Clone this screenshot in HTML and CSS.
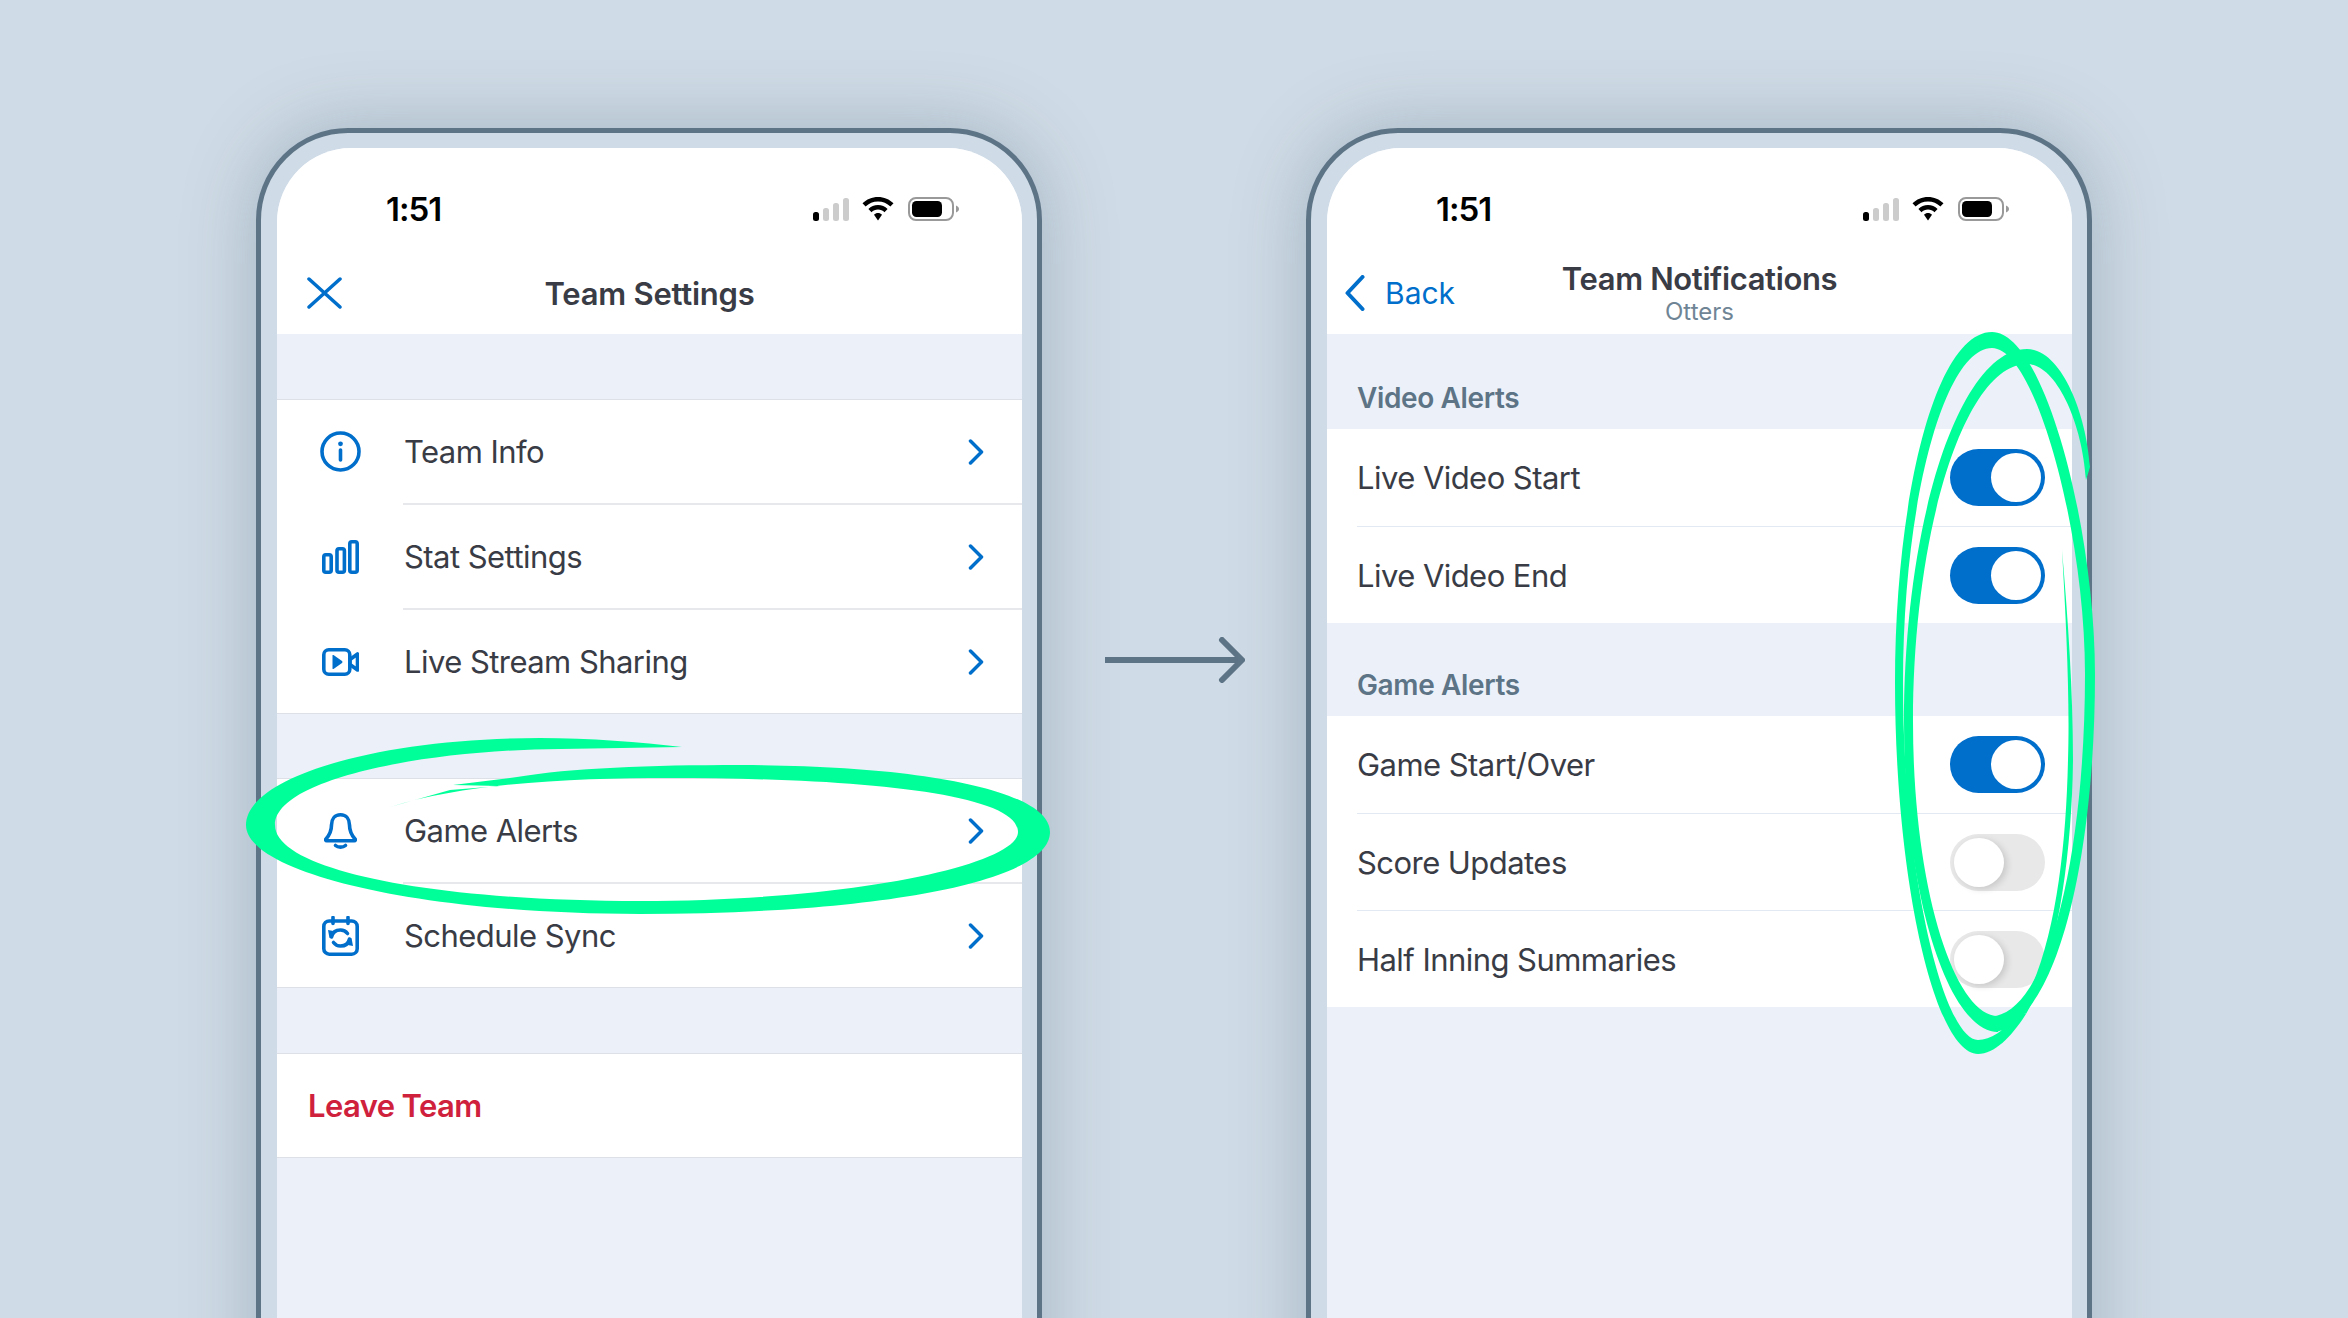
FILE: index.html
```html
<!DOCTYPE html>
<html lang="en">
<head>
<meta charset="utf-8">
<title>Team Settings and Team Notifications</title>
<link rel="stylesheet" href="styles.css">
</head>
<body>
<div class="page">
  <section class="phone">
    <div class="screen">
      <header class="top">
        <div class="status">
          <span class="time">1:51</span>
          <div class="status-icons">
            <svg class="sig" viewBox="0 0 36 23"><rect x="0" y="14" width="6" height="9" rx="2.500" fill="#000"/><rect x="10" y="10" width="6" height="13" rx="2.500" fill="#ccc"/><rect x="20" y="5" width="6" height="18" rx="2.500" fill="#ccc"/><rect x="30" y="0" width="6" height="23" rx="2.500" fill="#ccc"/></svg>
            <svg class="wifi" viewBox="0 0 32 24"><path d="M16 0C10 0 4.500 2.300 0.500 6.300L3.600 9.500C6.800 6.300 11.200 4.400 16 4.400S25.200 6.300 28.400 9.500L31.500 6.300C27.500 2.300 22 0 16 0Z"/><path d="M16 8C12.300 8 8.900 9.500 6.400 12L9.500 15.200C11.200 13.500 13.500 12.500 16 12.500S20.800 13.500 22.500 15.200L25.600 12C23.100 9.500 19.700 8 16 8Z"/><path d="M16 16C14.500 16 13.100 16.600 12 17.700L16 23.500L20 17.700C18.900 16.600 17.500 16 16 16Z"/></svg>
            <svg class="batt" viewBox="0 0 51 24"><rect x="1" y="1" width="44" height="22" rx="7" fill="none" stroke="#999" stroke-width="2"/><rect x="4" y="4" width="30" height="16" rx="4.500" fill="#000"/><path d="M48 8.500C50 9.500 51 10.500 51 12S50 14.500 48 15.500Z" fill="#999"/></svg>
          </div>
        </div>
        <div class="nav">
          <div class="nav-left">
            <svg class="close" viewBox="0 0 35 32"><path d="M2 2L33 30M33 2L2 30" fill="none" stroke="currentColor" stroke-width="3.500" stroke-linecap="round"/></svg>
          </div>
          <div class="nav-title">Team Settings</div>
          <div></div>
        </div>
      </header>

      <div class="gap"></div>
      <div class="group">
        <div class="row">
          <span class="icon"><svg viewBox="0 0 41 41" width="41" height="41"><circle cx="20.500" cy="20.500" r="18.500" class="ln"/><path d="M20.500 19V29" class="ln"/><circle cx="20.500" cy="12.800" r="2.400" class="dot"/></svg></span>
          <span class="label">Team Info</span>
          <svg class="chev" viewBox="0 0 16 26"><path d="M2.500 2L13.500 13L2.500 24"/></svg>
        </div>
        <div class="row">
          <span class="icon"><svg viewBox="0 0 37 34" width="37" height="34"><rect x="1.800" y="14.800" width="7.400" height="17.400" rx="2" class="ln"/><rect x="15" y="8.800" width="7.400" height="23.400" rx="2" class="ln"/><rect x="27.800" y="1.800" width="7.400" height="30.400" rx="2" class="ln"/></svg></span>
          <span class="label">Stat Settings</span>
          <svg class="chev" viewBox="0 0 16 26"><path d="M2.500 2L13.500 13L2.500 24"/></svg>
        </div>
        <div class="row">
          <span class="icon"><svg viewBox="0 0 37 28" width="37" height="28"><rect x="1.800" y="1.800" width="26" height="24.400" rx="5" class="ln"/><path d="M10.500 7.500C10.500 7 11 6.700 11.500 7L20 13C20.600 13.500 20.600 14.500 20 15L11.500 21C11 21.300 10.500 21 10.500 20.500Z" class="dot"/><path d="M28 11.500L35.500 6V22L28 16.500Z" class="ln"/></svg></span>
          <span class="label">Live Stream Sharing</span>
          <svg class="chev" viewBox="0 0 16 26"><path d="M2.500 2L13.500 13L2.500 24"/></svg>
        </div>
      </div>
      <div class="gap gap-mid"></div>
      <div class="group">
        <div class="row">
          <span class="icon"><svg viewBox="0 0 33 36" width="33" height="36"><path d="M16.500 1.800C10.500 1.800 7.500 6.500 7.500 12C7.500 18 6 21.500 2 26C1.300 26.800 1.700 27.700 2.800 27.700H30.200C31.300 27.700 31.700 26.800 31 26C27 21.500 25.500 18 25.500 12C25.500 6.500 22.500 1.800 16.500 1.800Z" class="ln"/><path d="M11.500 32.500C14 34.700 19 34.700 21.500 32.500" class="ln"/></svg></span>
          <span class="label">Game Alerts</span>
          <svg class="chev" viewBox="0 0 16 26"><path d="M2.500 2L13.500 13L2.500 24"/></svg>
        </div>
        <div class="row">
          <span class="icon"><svg viewBox="0 0 37 40" width="37" height="40"><rect x="1.800" y="5" width="33.400" height="33.200" rx="5.500" class="ln"/><path d="M11 1.500V7.500M26 1.500V7.500" class="ln"/><path d="M9.500 21C10.500 16.500 14 14 18.500 14C21.500 14 24 15.500 25.500 17.500" class="ln"/><path d="M27.500 23C26.500 27.500 23 30 18.500 30C15.500 30 13 28.500 11.500 26.500" class="ln"/><path d="M6 14L14 15.500L7.500 22ZM31 30L23 28.500L29.500 22Z" class="dot"/></svg></span>
          <span class="label">Schedule Sync</span>
          <svg class="chev" viewBox="0 0 16 26"><path d="M2.500 2L13.500 13L2.500 24"/></svg>
        </div>
      </div>
      <div class="gap"></div>
      <div class="group">
        <div class="row row-plain"><span class="danger">Leave Team</span></div>
      </div>
    </div>
  </section>

  <div class="arrow-col">
    <svg class="arrow" viewBox="0 0 140 46"><path d="M0 23H137" fill="none" stroke="#5d7486" stroke-width="6"/><path d="M117 3L137 23L117 43" fill="none" stroke="#5d7486" stroke-width="6" stroke-linecap="round" stroke-linejoin="round"/></svg>
  </div>

  <section class="phone">
    <div class="screen">
      <header class="top">
        <div class="status">
          <span class="time">1:51</span>
          <div class="status-icons">
            <svg class="sig" viewBox="0 0 36 23"><rect x="0" y="14" width="6" height="9" rx="2.500" fill="#000"/><rect x="10" y="10" width="6" height="13" rx="2.500" fill="#ccc"/><rect x="20" y="5" width="6" height="18" rx="2.500" fill="#ccc"/><rect x="30" y="0" width="6" height="23" rx="2.500" fill="#ccc"/></svg>
            <svg class="wifi" viewBox="0 0 32 24"><path d="M16 0C10 0 4.500 2.300 0.500 6.300L3.600 9.500C6.800 6.300 11.200 4.400 16 4.400S25.200 6.300 28.400 9.500L31.500 6.300C27.500 2.300 22 0 16 0Z"/><path d="M16 8C12.300 8 8.900 9.500 6.400 12L9.500 15.200C11.200 13.500 13.500 12.500 16 12.500S20.800 13.500 22.500 15.200L25.600 12C23.100 9.500 19.700 8 16 8Z"/><path d="M16 16C14.500 16 13.100 16.600 12 17.700L16 23.500L20 17.700C18.900 16.600 17.500 16 16 16Z"/></svg>
            <svg class="batt" viewBox="0 0 51 24"><rect x="1" y="1" width="44" height="22" rx="7" fill="none" stroke="#999" stroke-width="2"/><rect x="4" y="4" width="30" height="16" rx="4.500" fill="#000"/><path d="M48 8.500C50 9.500 51 10.500 51 12S50 14.500 48 15.500Z" fill="#999"/></svg>
          </div>
        </div>
        <div class="nav">
          <div class="nav-left back">
            <svg class="back-chev" viewBox="0 0 20 36"><path d="M17.500 2L2.500 18L17.500 34"/></svg>
            <span>Back</span>
          </div>
          <div class="nav-title two">
            <div>Team Notifications</div>
            <div class="sub">Otters</div>
          </div>
          <div></div>
        </div>
      </header>

      <div class="sec-head">Video Alerts</div>
      <div class="tgroup">
        <div class="trow"><span class="label">Live Video Start</span><span class="toggle on"><i class="knob"></i></span></div>
        <div class="trow"><span class="label">Live Video End</span><span class="toggle on"><i class="knob"></i></span></div>
      </div>
      <div class="sec-head sec-head-b">Game Alerts</div>
      <div class="tgroup">
        <div class="trow"><span class="label">Game Start/Over</span><span class="toggle on"><i class="knob"></i></span></div>
        <div class="trow"><span class="label">Score Updates</span><span class="toggle"><i class="knob"></i></span></div>
        <div class="trow"><span class="label">Half Inning Summaries</span><span class="toggle"><i class="knob"></i></span></div>
      </div>
    </div>
  </section>

  <svg class="marks" viewBox="0 0 2348 1318" aria-hidden="true">
    <path d="M682 747C640 742 590 738 540 738C378 738 246 777 246 825C246 873 420 914 640 914C860 914 1050 885 1050 832C1050 790 920 765 740 765C650 765 570 768 517 777L453 785L500 786L450 790L390 807C470 782 580 778 668 778C850 778 1018 792 1018 832C1018 865 850 901 640 901C430 901 275 870 275 825C275 780 420 750 561 749Z"/>
    <path d="M2090 467C2086 410 2060 349 2027 349C1960 349 1904 520 1904 722C1904 900 1950 1032 1998 1032V1016C1955 1016 1913 890 1913 722C1913 530 1965 364 2027 364C2055 364 2082 420 2086 480Z"/>
    <path d="M1996 1032C2060 1016 2095 850 2095 674C2095 530 2045 332 1992 332C1935 332 1895 500 1895 683C1895 880 1935 1054 1978 1054C1995 1054 2012 1036 2026 1014L2020 1010C2008 1028 1992 1040 1978 1040C1945 1040 1903 880 1903 683C1903 500 1945 348 1992 348C2035 348 2085 530 2085 674C2085 850 2050 1005 1996 1016Z"/>
    <path d="M2062 550C2066 620 2070 700 2068 760C2066 850 2055 950 2020 1010L2026 1014C2058 960 2072 850 2073 760C2073 690 2068 620 2062 550Z"/>
  </svg>
</div>
</body>
</html>
```

FILE: styles.css
```css
* { box-sizing: border-box; }
html, body { margin: 0; padding: 0; }
body {
  background: #cfdbe6;
  font-family: Inter, "Liberation Sans", sans-serif;
  color: #393c45;
}
.page {
  position: relative;
  width: 2348px;
  height: 1318px;
  overflow: hidden;
  display: flex;
  justify-content: center;
  align-items: flex-start;
  padding-top: 128px;
}
.phone {
  width: 786px;
  height: 1400px;
  flex: none;
  padding: 15px 15px 0 16px;
  background: #cfdbe6;
  border: 5px solid #5d7486;
  border-radius: 92px;
  box-shadow: 0 0 70px rgba(93, 116, 134, .38);
}
.screen {
  height: 100%;
  background: #ecf1f9;
  border-radius: 74px 74px 0 0;
  overflow: hidden;
}
.top { height: 186px; background: #fff; }
.status {
  height: 104px;
  padding: 45px 36px 27px 109px;
  display: flex;
  justify-content: space-between;
  align-items: center;
}
.time { font-size: 33px; font-weight: 600; color: #000; line-height: 32px; letter-spacing: -1px; }
.status-icons { display: flex; align-items: center; gap: 14px; margin-right: 27px; }
.sig { width: 36px; height: 23px; display: block; margin-right: -1px; }
.wifi { width: 32px; height: 24px; display: block; fill: #000; }
.batt { width: 51px; height: 24px; display: block; }
.nav {
  height: 82px;
  display: grid;
  grid-template-columns: 1fr auto 1fr;
  align-items: center;
}
.nav-left { display: flex; align-items: center; color: #006ecb; padding-left: 30px; }
.close { width: 35px; height: 32px; display: block; }
.nav-title { font-size: 31px; font-weight: 600; text-align: center; color: #393c45; letter-spacing: -.25px; }
.nav-title.two { line-height: 36px; letter-spacing: -.38px; }
.sub { font-size: 24px; font-weight: 400; color: #6f8595; line-height: 28px; margin-top: 1px; letter-spacing: 0; }
.back { padding-left: 18px; gap: 20px; font-size: 30px; }
.back-chev { width: 20px; height: 36px; display: block; fill: none; stroke: #006ecb; stroke-width: 4px; stroke-linecap: round; stroke-linejoin: round; }
.gap { height: 65px; }
.gap-mid { height: 64px; }
.group { background: #fff; border-top: 1px solid #dde1e7; border-bottom: 1px solid #dde1e7; }
.row {
  height: 103px;
  display: flex;
  align-items: center;
  padding-right: 38px;
}
.row + .row {
  height: 105px;
  border-top: 2px solid #e6e8ec;
  border-image: linear-gradient(to right, transparent 127px, #e6e8ec 127px) 1;
}
.row-plain { padding-left: 31px; }
.icon { width: 127px; flex: none; display: flex; justify-content: center; align-items: center; }
.icon svg { display: block; }
.ln { fill: none; stroke: #006ecb; stroke-width: 3.600px; stroke-linecap: round; stroke-linejoin: round; }
.dot { fill: #006ecb; }
.label { flex: 1; font-size: 31px; font-weight: 400; color: #393c45; letter-spacing: -.55px; }
.chev { width: 16px; height: 26px; fill: none; stroke: #006ecb; stroke-width: 3.500px; stroke-linecap: round; stroke-linejoin: round; }
.danger { font-size: 31px; font-weight: 600; color: #d0213c; letter-spacing: -.6px; }
.sec-head {
  height: 95px;
  padding: 0 0 14px 30px;
  display: flex;
  align-items: flex-end;
  font-size: 28px;
  font-weight: 600;
  color: #5d7486;
  letter-spacing: -.37px;
}
.sec-head-b { height: 93px; }
.tgroup { background: #fff; }
.trow {
  height: 97px;
  margin-left: 30px;
  padding-right: 27px;
  display: flex;
  align-items: center;
}
.trow + .trow { border-top: 1px solid #e3e9f2; }
.toggle {
  width: 95px;
  height: 57px;
  border-radius: 29px;
  background: #e8e8e8;
  padding: 4px;
  display: flex;
  justify-content: flex-start;
  flex: none;
}
.toggle.on { background: #006ecb; justify-content: flex-end; }
.knob {
  display: block;
  width: 50px;
  height: 49px;
  border-radius: 50%;
  background: #fff;
  box-shadow: 3px 2px 7px rgba(0, 0, 0, .14);
}
.toggle.on .knob { box-shadow: none; }
.arrow-col { width: 264px; flex: none; display: flex; justify-content: center; padding: 509px 0 0 2px; }
.arrow { width: 140px; height: 46px; display: block; }
.marks { position: absolute; left: 0; top: 0; width: 2348px; height: 1318px; fill: #00ff99; pointer-events: none; }
```
